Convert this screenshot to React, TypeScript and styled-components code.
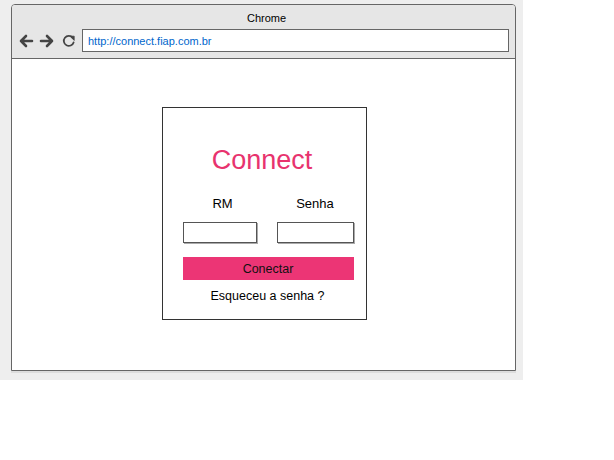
import React from "react";
import styled, { createGlobalStyle } from "styled-components";

const Global = createGlobalStyle`
  html, body { margin: 0; padding: 0; background: #ffffff; }
  body { font-family: "Liberation Sans", Arial, sans-serif; }
`;

const Canvas = styled.div`
  width: 523px;
  height: 380px;
  box-sizing: border-box;
  background: #eeeeee;
  padding: 4px 0 0 11px;
`;

const Window = styled.div`
  width: 505px;
  height: 367px;
  box-sizing: border-box;
  border: 1px solid #666666;
  border-radius: 4px 4px 0 0;
  background: #ffffff;
  display: flex;
  flex-direction: column;
  box-shadow: 0 2px 0 #dddddd;
`;

const Header = styled.div`
  height: 54px;
  box-sizing: border-box;
  background: #e6e6e6;
  border-bottom: 1px solid #666666;
  border-radius: 3px 3px 0 0;
  display: flex;
  flex-direction: column;
`;

const Title = styled.div`
  height: 24px;
  line-height: 27px;
  text-align: center;
  font-size: 11px;
  color: #000000;
  padding-left: 6px;
`;

const NavRow = styled.div`
  display: flex;
  align-items: center;
  padding: 0 6px 0 6px;
  height: 23px;
`;

const NavIcon = styled.svg<{ $mr: number }>`
  width: 16px;
  height: 16px;
  margin-right: ${(p) => p.$mr}px;
  flex: none;
`;

const UrlBox = styled.div`
  flex: 1;
  height: 23px;
  box-sizing: border-box;
  border: 1px solid #666666;
  background: #ffffff;
  font-size: 11px;
  color: #0066cc;
  display: flex;
  align-items: center;
  padding-left: 5px;
`;

const Content = styled.div`
  flex: 1;
  display: flex;
  justify-content: center;
  align-items: flex-start;
  padding-top: 48px;
  padding-left: 1px;
`;

const Card = styled.div`
  width: 205px;
  height: 213px;
  box-sizing: border-box;
  border: 1px solid #333333;
  padding: 37px 12px 0 20px;
  display: flex;
  flex-direction: column;
`;

const Brand = styled.div`
  font-size: 27px;
  line-height: 31px;
  color: #e8336e;
  text-align: center;
  padding-right: 12px;
`;

const Fields = styled.div`
  display: grid;
  grid-template-columns: 74px 77px;
  column-gap: 20px;
  row-gap: 10px;
  margin-top: 20px;
`;

const Label = styled.div<{ $pl: number }>`
  font-size: 13px;
  line-height: 15px;
  color: #000000;
  text-align: center;
  padding-left: ${(p) => p.$pl}px;
`;

const Input = styled.div`
  height: 21px;
  margin-top: 1px;
  box-sizing: border-box;
  border: 1px solid #555555;
  box-shadow: 1px 1px 0 #aaaaaa;
  background: #ffffff;
`;

const Button = styled.div`
  margin-top: 14px;
  width: 171px;
  height: 23px;
  background: #ec3575;
  color: #111111;
  font-size: 12.5px;
  display: flex;
  align-items: center;
  justify-content: center;
`;

const Forgot = styled.div`
  margin-top: 9px;
  font-size: 12.5px;
  line-height: 15px;
  text-align: center;
  color: #000000;
  padding-right: 1px;
`;

export default function App() {
  return (
    <>
      <Global />
      <Canvas>
        <Window>
          <Header>
            <Title>Chrome</Title>
            <NavRow>
              <NavIcon $mr={5} viewBox="0 0 16 16">
                <path d="M14 8H3M8 3L3 8l5 5" fill="none" stroke="#444" strokeWidth="2.6" strokeLinecap="round" strokeLinejoin="round" />
              </NavIcon>
              <NavIcon $mr={6} viewBox="0 0 16 16">
                <path d="M2 8h11M8 3l5 5-5 5" fill="none" stroke="#444" strokeWidth="2.6" strokeLinecap="round" strokeLinejoin="round" />
              </NavIcon>
              <NavIcon $mr={5} viewBox="0 0 16 16">
                <path d="M12.6 9.4A5 5 0 1 1 11.6 4.6" fill="none" stroke="#444" strokeWidth="1.8" strokeLinecap="round" />
                <path d="M9 3.2h4.2V7.4Z" fill="#444" stroke="#444" strokeWidth="0.8" strokeLinejoin="round" />
              </NavIcon>
              <UrlBox>http://connect.fiap.com.br</UrlBox>
            </NavRow>
          </Header>
          <Content>
            <Card>
              <Brand>Connect</Brand>
              <Fields>
                <Label $pl={6}>RM</Label>
                <Label $pl={0}>Senha</Label>
                <Input />
                <Input />
              </Fields>
              <Button>Conectar</Button>
              <Forgot>Esqueceu a senha ?</Forgot>
            </Card>
          </Content>
        </Window>
      </Canvas>
    </>
  );
}
